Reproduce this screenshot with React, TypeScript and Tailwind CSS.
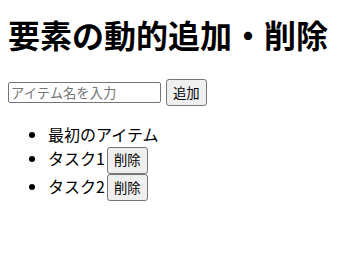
import React, { useState } from "react";

type Item = { id: number; name: string; removable: boolean };

const App = () => {
  const [name, setName] = useState("");
  const [items, setItems] = useState<Item[]>([
    { id: 0, name: "最初のアイテム", removable: false },
    { id: 1, name: "タスク1", removable: true },
    { id: 2, name: "タスク2", removable: true },
  ]);

  const addItem = () => {
    if (!name.trim()) return;
    setItems([...items, { id: Date.now(), name, removable: true }]);
    setName("");
  };

  const removeItem = (id: number) => {
    setItems(items.filter((item) => item.id !== id));
  };

  return (
    <div className="p-2 text-black bg-white font-['Noto_Sans_CJK_JP',sans-serif]">
      <h1 className="text-[32px] font-bold leading-normal mt-[2px] mb-[21px]">要素の動的追加・削除</h1>

      <div className="flex items-center gap-[5px]">
        <input
          value={name}
          onChange={(e) => setName(e.target.value)}
          placeholder="アイテム名を入力"
          className="w-[153px] h-[21px] px-[2px] text-[13.33px] border border-[#767676] rounded-[2px] placeholder:text-[#757575] outline-none"
        />
        <button
          onClick={addItem}
          className="h-[27px] px-[6px] text-[13.33px] bg-[#efefef] border border-[#767676] rounded-[3px]"
        >
          追加
        </button>
      </div>

      <ul className="mt-4 pl-10 list-disc text-base leading-normal">
        {items.map((item) => (
          <li key={item.id}>
            {item.name}
            {item.removable && (
              <button
                onClick={() => removeItem(item.id)}
                className="ml-[2px] h-[27px] px-[6px] text-[13.33px] bg-[#efefef] border border-[#767676] rounded-[3px]"
              >
                削除
              </button>
            )}
          </li>
        ))}
      </ul>
    </div>
  );
};

export default App;
